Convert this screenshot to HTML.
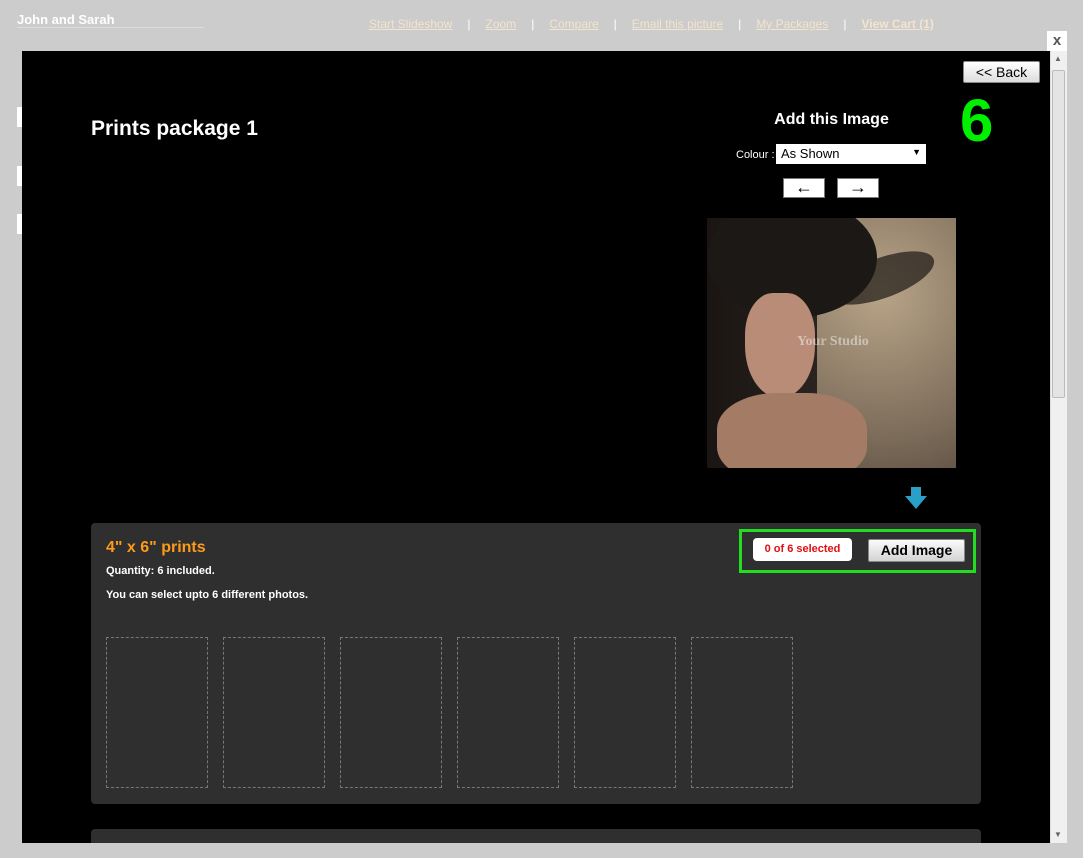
<!DOCTYPE html>
<html><head><style>
*{margin:0;padding:0;box-sizing:border-box}
body{width:1083px;height:858px;background:#cccccc;font-family:"Liberation Sans",Arial,sans-serif;position:relative;overflow:hidden}
.a{position:absolute}
.nav{top:17px;left:369px;font-size:12px;color:#f0e0c8;white-space:nowrap}
.nav u{color:#f3e4cc}
.nav span{color:#fff;margin:0 15px}
</style></head><body>
<div class="a" style="left:17px;top:12px;font-size:13px;font-weight:bold;color:#fff">John and Sarah</div>
<div class="a" style="left:17px;top:27px;width:187px;height:1px;background:#ddd"></div>
<div class="a nav"><u>Start Slideshow</u><span>|</span><u>Zoom</u><span>|</span><u>Compare</u><span>|</span><u>Email this picture</u><span>|</span><u>My Packages</u><span>|</span><u style="font-weight:bold">View Cart (1)</u></div>
<div class="a" style="left:17px;top:107px;width:5px;height:20px;background:#fff"></div>
<div class="a" style="left:17px;top:166px;width:5px;height:20px;background:#fff"></div>
<div class="a" style="left:17px;top:214px;width:5px;height:20px;background:#fff"></div>
<div class="a" style="left:1047px;top:31px;width:20px;height:20px;background:#fff;color:#555;font-weight:bold;font-size:15px;text-align:center;line-height:20px">x</div>
<div class="a" style="left:22px;top:51px;width:1028px;height:792px;background:#000"></div>
<div class="a" style="left:1050px;top:51px;width:17px;height:792px;background:#f0f0f0;border-left:1px solid #ddd"></div>
<div class="a" style="left:1052px;top:70px;width:13px;height:328px;background:#e4e4e4;border:1px solid #bbb;border-radius:2px"></div>
<div class="a" style="left:1054px;top:54px;font-size:8px;color:#666">▲</div>
<div class="a" style="left:1054px;top:830px;font-size:8px;color:#666">▼</div>
<div class="a" style="left:963px;top:61px;width:77px;height:22px;background:linear-gradient(#fff,#ddd);border:1px solid #888;border-radius:2px;font-size:14px;text-align:center;line-height:20px;color:#000">&lt;&lt; Back</div>
<div class="a" style="left:960px;top:86px;font-size:60px;font-weight:bold;color:#00f000;line-height:70px">6</div>
<div class="a" style="left:91px;top:117px;font-size:21px;font-weight:bold;color:#fff">Prints package 1</div>
<div class="a" style="left:707px;top:111px;width:249px;text-align:center;font-size:16px;font-weight:bold;color:#fff">Add this Image</div>
<div class="a" style="left:736px;top:149px;font-size:11px;color:#fff">Colour :</div>
<div class="a" style="left:776px;top:144px;width:150px;height:20px;background:#fff;font-size:13px;padding:2px 5px;color:#000">As Shown<span style="position:absolute;right:5px;top:3px;font-size:9px">▼</span></div>
<div class="a" style="left:783px;top:178px;width:42px;height:20px;background:#fff;border:1px solid #777;font-size:18px;line-height:16px;text-align:center">←</div>
<div class="a" style="left:837px;top:178px;width:42px;height:20px;background:#fff;border:1px solid #777;font-size:18px;line-height:16px;text-align:center">→</div>
<div class="a" style="left:707px;top:218px;width:249px;height:250px;background:radial-gradient(ellipse at 70% 30%,#b8a488,#7a6a58 60%,#4a3e34);overflow:hidden">
<div class="a" style="left:0;top:0;width:110px;height:250px;background:linear-gradient(90deg,#1a1512,#2a2420)"></div>
<div class="a" style="left:0px;top:-20px;width:170px;height:120px;border-radius:50%;background:#1c1816"></div>
<div class="a" style="left:120px;top:40px;width:110px;height:40px;border-radius:50%;background:rgba(28,24,22,.7);transform:rotate(-20deg)"></div>
<div class="a" style="left:38px;top:75px;width:70px;height:105px;border-radius:40% 40% 50% 50%;background:#b88c76"></div>
<div class="a" style="left:10px;top:175px;width:150px;height:90px;border-radius:40%;background:#a47c66"></div>
<div class="a" style="left:90px;top:116px;font-family:'Liberation Serif',serif;font-size:14px;color:rgba(255,255,255,.45);font-weight:bold">Your Studio</div>
</div>
<div class="a" style="left:905px;width:0;height:0;border-left:11px solid transparent;border-right:11px solid transparent;border-top:13px solid #2aa0c8;top:496px"></div>
<div class="a" style="left:911px;top:487px;width:10px;height:10px;background:#2aa0c8"></div>
<div class="a" style="left:91px;top:523px;width:890px;height:281px;background:#2f2f2f;border-radius:4px"></div>
<div class="a" style="left:106px;top:539px;font-size:16px;font-weight:bold;color:#ff9a1a">4" x 6" prints</div>
<div class="a" style="left:106px;top:565px;font-size:11px;font-weight:bold;color:#fff">Quantity: 6 included.</div>
<div class="a" style="left:106px;top:589px;font-size:11px;font-weight:bold;color:#fff">You can select upto 6 different photos.</div>
<div class="a" style="left:739px;top:529px;width:237px;height:44px;border:3px solid #22dd22"></div>
<div class="a" style="left:753px;top:538px;width:99px;height:23px;background:#fff;border-radius:4px;color:#e01010;font-size:11px;font-weight:bold;text-align:center;line-height:23px">0 of 6 selected</div>
<div class="a" style="left:868px;top:539px;width:97px;height:23px;background:linear-gradient(#fafafa,#d4d4d4);border:1px solid #888;border-radius:2px;font-size:14px;font-weight:bold;text-align:center;line-height:21px">Add Image</div>
<div class="a" style="left:106px;top:637px;width:102px;height:151px;border:1px dashed #777"></div>
<div class="a" style="left:223px;top:637px;width:102px;height:151px;border:1px dashed #777"></div>
<div class="a" style="left:340px;top:637px;width:102px;height:151px;border:1px dashed #777"></div>
<div class="a" style="left:457px;top:637px;width:102px;height:151px;border:1px dashed #777"></div>
<div class="a" style="left:574px;top:637px;width:102px;height:151px;border:1px dashed #777"></div>
<div class="a" style="left:691px;top:637px;width:102px;height:151px;border:1px dashed #777"></div>
<div class="a" style="left:91px;top:829px;width:890px;height:14px;background:#2f2f2f;border-radius:4px 4px 0 0"></div>
</body></html>
